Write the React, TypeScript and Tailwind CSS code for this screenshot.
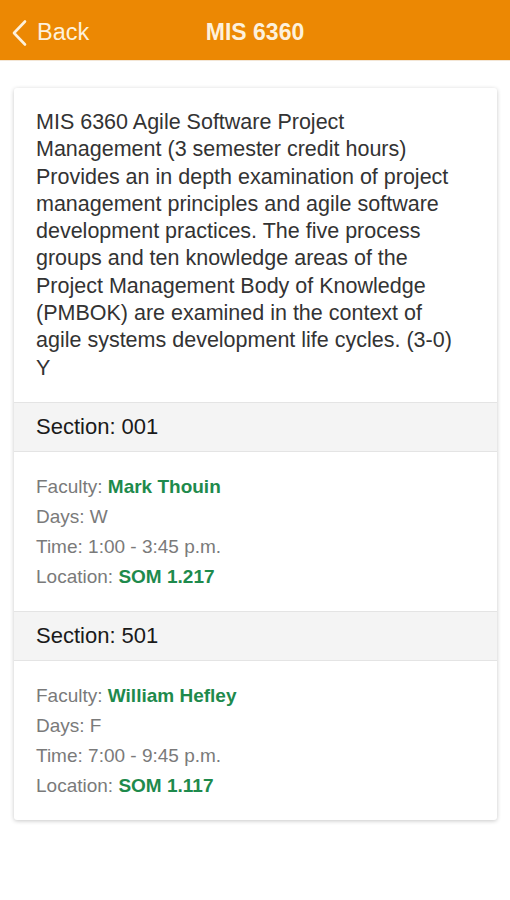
import React from 'react';

type Section = {
  id: string;
  faculty: string;
  days: string;
  time: string;
  location: string;
};

const sections: Section[] = [
  { id: '001', faculty: 'Mark Thouin', days: 'W', time: '1:00 - 3:45 p.m.', location: 'SOM 1.217' },
  { id: '501', faculty: 'William Hefley', days: 'F', time: '7:00 - 9:45 p.m.', location: 'SOM 1.117' },
];

function SectionBlock({ s }: { s: Section }) {
  return (
    <div>
      <div className="h-[50px] flex items-center px-[22px] bg-[#f4f4f4] border-y border-[#e4e4e4] text-[22px] text-[#1a1a1a]">
        Section: {s.id}
      </div>
      <div className="px-[22px] pt-[20px] pb-[19px] text-[19px] leading-[30px] text-[#7a7a7a]">
        <div>
          Faculty: <span className="font-bold text-[#1e8a4c]">{s.faculty}</span>
        </div>
        <div>Days: {s.days}</div>
        <div>Time: {s.time}</div>
        <div>
          Location: <span className="font-bold text-[#1e8a4c]">{s.location}</span>
        </div>
      </div>
    </div>
  );
}

export default function App() {
  return (
    <div className="min-h-[900px] w-[510px] bg-white font-['Liberation_Sans',Arial,sans-serif]">
      {/* nav bar */}
      <div className="h-[60px] pt-[5px] bg-[#ec8803] relative flex items-center justify-center">
        <div className="absolute left-[11px] top-0 h-full pt-[5px] flex items-center gap-[9px] text-[#fdf1dc]">
          <svg width="17" height="28" viewBox="0 0 17 28" fill="none">
            <path d="M14 2.5L3 14l11 11.5" stroke="currentColor" strokeWidth="2.6" strokeLinecap="round" strokeLinejoin="round" />
          </svg>
          <span className="text-[23.5px]">Back</span>
        </div>
        <span className="text-[23px] font-bold text-[#fdf1dc]">MIS 6360</span>
      </div>
      <div className="h-px bg-[#f3e6d6]" />

      <div className="px-[14px] pt-[27px] pb-[40px]">
        <div className="w-[483px] bg-white rounded-[3px] shadow-[0_1px_4px_rgba(0,0,0,0.22)]">
          <p className="pl-[22px] pr-[27px] pt-[21px] pb-[20px] text-[21.5px] leading-[27.3px] text-[#333333]">
            MIS 6360 Agile Software Project Management (3 semester credit hours) Provides an in depth examination of
            project management principles and agile software development practices. The five process groups and ten
            knowledge areas of the Project Management Body of Knowledge (PMBOK) are examined in the context of agile
            systems development life cycles. (3-0) Y
          </p>
          {sections.map((s) => (
            <SectionBlock key={s.id} s={s} />
          ))}
        </div>
      </div>
    </div>
  );
}
